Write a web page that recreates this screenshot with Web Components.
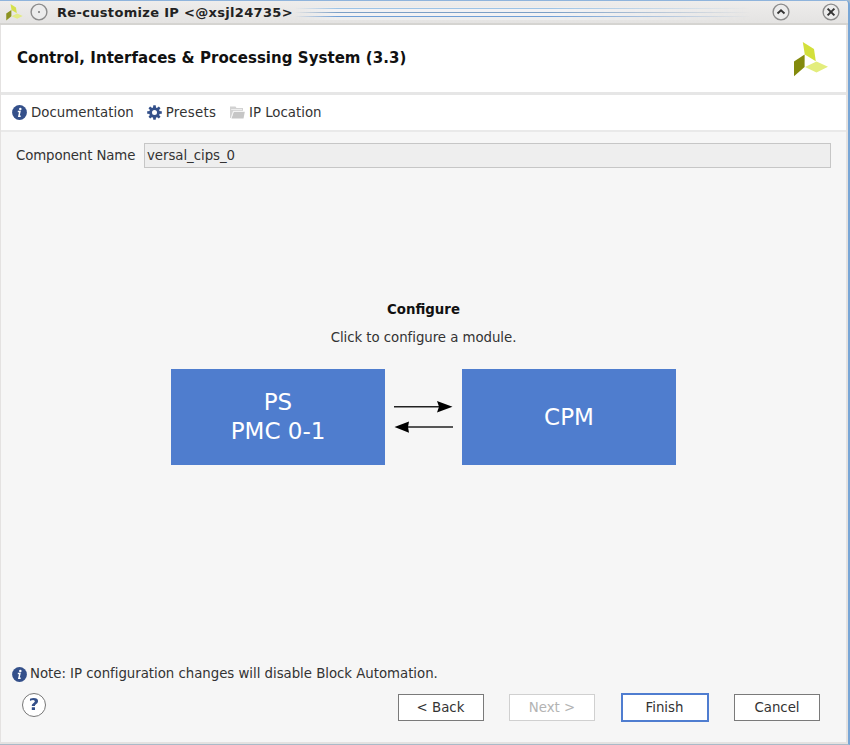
<!DOCTYPE html>
<html lang="en">
<head>
<meta charset="utf-8">
<title>Re-customize IP</title>
<style>
html,body{margin:0;height:100%;overflow:hidden}
body{font:13.33px/18px "DejaVu Sans",sans-serif;color:#333;background:#f6f6f6}
</style>
</head>
<body>
<ip-dialog></ip-dialog>
<script>
const define = (name, html) => customElements.define(name, class extends HTMLElement {
  constructor() {
    super();
    this.attachShadow({ mode: 'open' }).innerHTML = html;
  }
});

define('brand-logo', `
<style>:host{display:block;flex:none}svg{display:block;width:100%;height:100%}</style>
<svg viewBox="0 0 34 35"><path fill="#d3e03b" d="M8.800 0 20 7 21.800 19.300 10.800 12.500Z"/><path fill="#838a0c" d="M0 19.500 10.600 12.500V25L0 34.200Z"/><path fill="#e3ed7d" d="M11 25 22.500 19.500 34 24.700 22.500 30.400Z"/></svg>`);

define('info-icon', `
<style>:host{display:block;width:15px;height:15px}svg{display:block}</style>
<svg width="15" height="15" viewBox="0 0 15 15"><circle cx="7.500" cy="7.500" r="7.400" fill="#34508a"/><circle cx="8.300" cy="3.900" r="1.250" fill="#fff"/><path d="M5.800 6.600H7.900L6.900 11.200H8.700" fill="none" stroke="#fff" stroke-width="1.500"/></svg>`);

define('gear-icon', `
<style>:host{display:block;width:15px;height:15px}svg{display:block}</style>
<svg width="15" height="15" viewBox="-7.500 -7.500 15 15"><g fill="#34508a"><path id="t" d="M-1.600-4 -1.200-7.300H1.200L1.600-4Z"/><use href="#t" transform="rotate(45)"/><use href="#t" transform="rotate(90)"/><use href="#t" transform="rotate(135)"/><use href="#t" transform="rotate(180)"/><use href="#t" transform="rotate(225)"/><use href="#t" transform="rotate(270)"/><use href="#t" transform="rotate(315)"/></g><circle r="3.900" fill="none" stroke="#34508a" stroke-width="2.800"/></svg>`);

define('folder-icon', `
<style>:host{display:block;width:15px;height:13px}svg{display:block}</style>
<svg width="15" height="13" viewBox="0 0 15 13"><path d="M0 12V.500H5.500L6.500 2H13V5H3.500L1 12Z" fill="#d2d2d2"/><path d="M1.500 12.500 3.800 5.800H14.800L13.500 12.500Z" fill="#c6c6c6"/><path d="M1.200 3.500H12M1.200 11.500 3.300 5.300H14.500" fill="none" stroke="#f4f4f4" stroke-width=".8"/></svg>`);

customElements.define('title-glyph', class extends HTMLElement {
  constructor() {
    super();
    const art = {
      menu: '<circle cx="9" cy="9" r="1" fill="#777"/>',
      shade: '<path d="M5.500 10.500 9 7.300 12.500 10.500" fill="none" stroke="#333" stroke-width="1.900"/>',
      close: '<path d="M5.600 5.600 12.400 12.400M12.400 5.600 5.600 12.400" fill="none" stroke="#333" stroke-width="2"/>'
    }[this.getAttribute('kind')];
    this.attachShadow({ mode: 'open' }).innerHTML = `
<style>:host{display:block;flex:none;width:18px;height:18px}svg{display:block}</style>
<svg width="18" height="18" viewBox="0 0 18 18"><circle cx="9" cy="9" r="7.900" fill="#ececec" stroke="#8b8b8b" stroke-width="1.400"/>${art}</svg>`;
  }
});

define('title-bar', `
<style>
:host{display:flex;box-sizing:border-box;height:25px;align-items:center;background:linear-gradient(#eeedec,#e4e3e2);border-top:1px solid #8fb4dc;border-bottom:2px solid #d5d4d1;padding:0 8px 0 6px;color:#222;font-weight:bold;font-size:13px}
brand-logo{width:17px;height:17px;margin-right:7px;opacity:.9}
span{margin-left:9px;padding-top:1px;white-space:nowrap;letter-spacing:.32px}
.lines{flex:1;margin:3px 12px 0 2px;height:13px;background:linear-gradient(#eee 0 1px,#9cc3e6 1px 2px,#f2f2f4 2px 5px,#7b9fc6 5px 6px,#f2f2f4 6px 9px,#6f9fd6 9px 10px,#eee 10px);-webkit-mask:linear-gradient(90deg,transparent,#000 9%,#000 55%,transparent 98%);mask:linear-gradient(90deg,transparent,#000 9%,#000 55%,transparent 98%)}
.close{margin-left:32px}
</style>
<brand-logo></brand-logo><title-glyph kind="menu"></title-glyph><span><slot></slot></span><div class="lines"></div><title-glyph kind="shade"></title-glyph><title-glyph class="close" kind="close"></title-glyph>`);

define('page-header', `
<style>
:host{display:flex;box-sizing:border-box;height:70px;justify-content:space-between;background:#fff;border-bottom:3px solid #e6e6e6;padding:17px 18px 0 16px;color:#111;font-weight:bold;font-size:15px}
span{line-height:32px;white-space:nowrap;letter-spacing:.04px}
brand-logo{width:34px;height:35px}
</style>
<span><slot></slot></span><brand-logo></brand-logo>`);

define('tool-item', `
<style>:host{display:flex;align-items:center;gap:4px;white-space:nowrap}</style>
<slot name="icon"></slot><span><slot></slot></span>`);

define('tool-bar', `
<style>:host{display:flex;box-sizing:border-box;height:37px;align-items:center;gap:13px;background:#fff;border-bottom:2px solid #e9e9e9;padding-left:11px}</style>
<slot></slot>`);

define('name-field', `
<style>
:host{display:flex;align-items:center;margin:11px 15px 0 15px;height:25px}
label{width:128px;white-space:nowrap;letter-spacing:-.12px}
div{flex:1;box-sizing:border-box;height:25px;line-height:23px;border:1px solid #c6c6c6;background:#eee;padding-left:2px;letter-spacing:-.05px}
</style>
<label><slot name="label"></slot></label><div><slot></slot></div>`);

define('module-block', `
<style>:host{display:flex;box-sizing:border-box;width:214px;height:96px;flex-direction:column;align-items:center;justify-content:center;background:#4f7dce;color:#fff;font-size:23px;line-height:29px;text-align:center}</style>
<slot></slot>`);

define('link-arrows', `
<style>:host{display:block;width:77px;height:96px}svg{display:block}</style>
<svg width="77" height="96" viewBox="0 0 77 96"><path d="M9 37.700H54M68 58H22" stroke="#222" stroke-width="1.600"/><path d="M67.500 37.700 52 32 54 37.700 52 43.600ZM9.500 58 24 52.500 23 58 24 63.700Z" fill="#000"/></svg>`);

define('config-panel', `
<style>
:host{display:flex;flex-direction:column;align-items:center;margin-top:133px}
.t{font-weight:bold;color:#111}
.s{margin-top:10px;letter-spacing:-.05px}
.row{display:flex;margin-top:22px}
</style>
<div class="t"><slot name="title"></slot></div><div class="s"><slot name="sub"></slot></div>
<div class="row"><slot></slot></div>`);

define('push-button', `
<style>
:host{display:block;box-sizing:border-box;width:86px;height:27px;line-height:26px;border:1px solid #7a7a7a;background:#fff;text-align:center}
:host([off]){border-color:#d0d0d0;color:#b3b3b3}
:host([primary]){width:88px;height:29px;border:2px solid #4f7dd0;line-height:26px}
</style><slot></slot>`);

define('help-button', `
<style>:host{display:block;box-sizing:border-box;width:24px;height:24px;margin-top:-5px;border:1px solid #777;border-radius:50%;background:#fff;color:#34508a;font-weight:bold;font-size:15px;line-height:22px;text-align:center}span{display:block;transform:scaleX(1.200)}</style><span><slot></slot></span>`);

define('dialog-footer', `
<style>
:host{display:block;margin-top:auto}
.note{display:flex;align-items:center;gap:3px;padding-left:11px;height:18px;white-space:nowrap;letter-spacing:-.03px}
info-icon{margin-top:1px}
.row{display:flex;align-items:center;height:29px;margin:10px 26px 20px 21px}
.buttons{display:flex;align-items:center;gap:25.500px;margin-left:auto}
</style>
<div class="note"><info-icon></info-icon><span><slot name="note"></slot></span></div>
<div class="row"><slot name="help"></slot><div class="buttons"><slot></slot></div></div>`);

define('ip-dialog', `
<style>
:host{display:flex;box-sizing:border-box;width:850px;height:745px;flex-direction:column;background:linear-gradient(#a9bccd,#9fb3c5)}
.win{display:flex;flex:1;box-sizing:border-box;flex-direction:column;background:#e4e2e1;border-right:2px solid #78a6d6;border-bottom:1px solid #a9bac8;border-top-right-radius:5px;overflow:hidden}
.body{display:flex;flex:1;flex-direction:column;margin:0 2px 2px 1px;background:#f6f6f6}
.wide{letter-spacing:.3px;margin-right:.600px}
</style>
<div class="win">
<title-bar>Re-customize IP &lt;@xsjl24735&gt;</title-bar>
<div class="body">
<page-header>Control, Interfaces &amp; Processing System (3.3)</page-header>
<tool-bar>
<tool-item><info-icon slot="icon"></info-icon>Documentation</tool-item>
<tool-item class="wide"><gear-icon slot="icon"></gear-icon>Presets</tool-item>
<tool-item><folder-icon slot="icon"></folder-icon>IP Location</tool-item>
</tool-bar>
<name-field><span slot="label">Component Name</span>versal_cips_0</name-field>
<config-panel><span slot="title">Configure</span><span slot="sub">Click to configure a module.</span>
<module-block><div>PS</div><div>PMC 0-1</div></module-block><link-arrows></link-arrows><module-block>CPM</module-block>
</config-panel>
<dialog-footer><span slot="note">Note: IP configuration changes will disable Block Automation.</span><help-button slot="help">?</help-button>
<push-button>&lt; Back</push-button><push-button off>Next &gt;</push-button><push-button primary>Finish</push-button><push-button>Cancel</push-button></dialog-footer>
</div></div>`);
</script>
</body>
</html>
